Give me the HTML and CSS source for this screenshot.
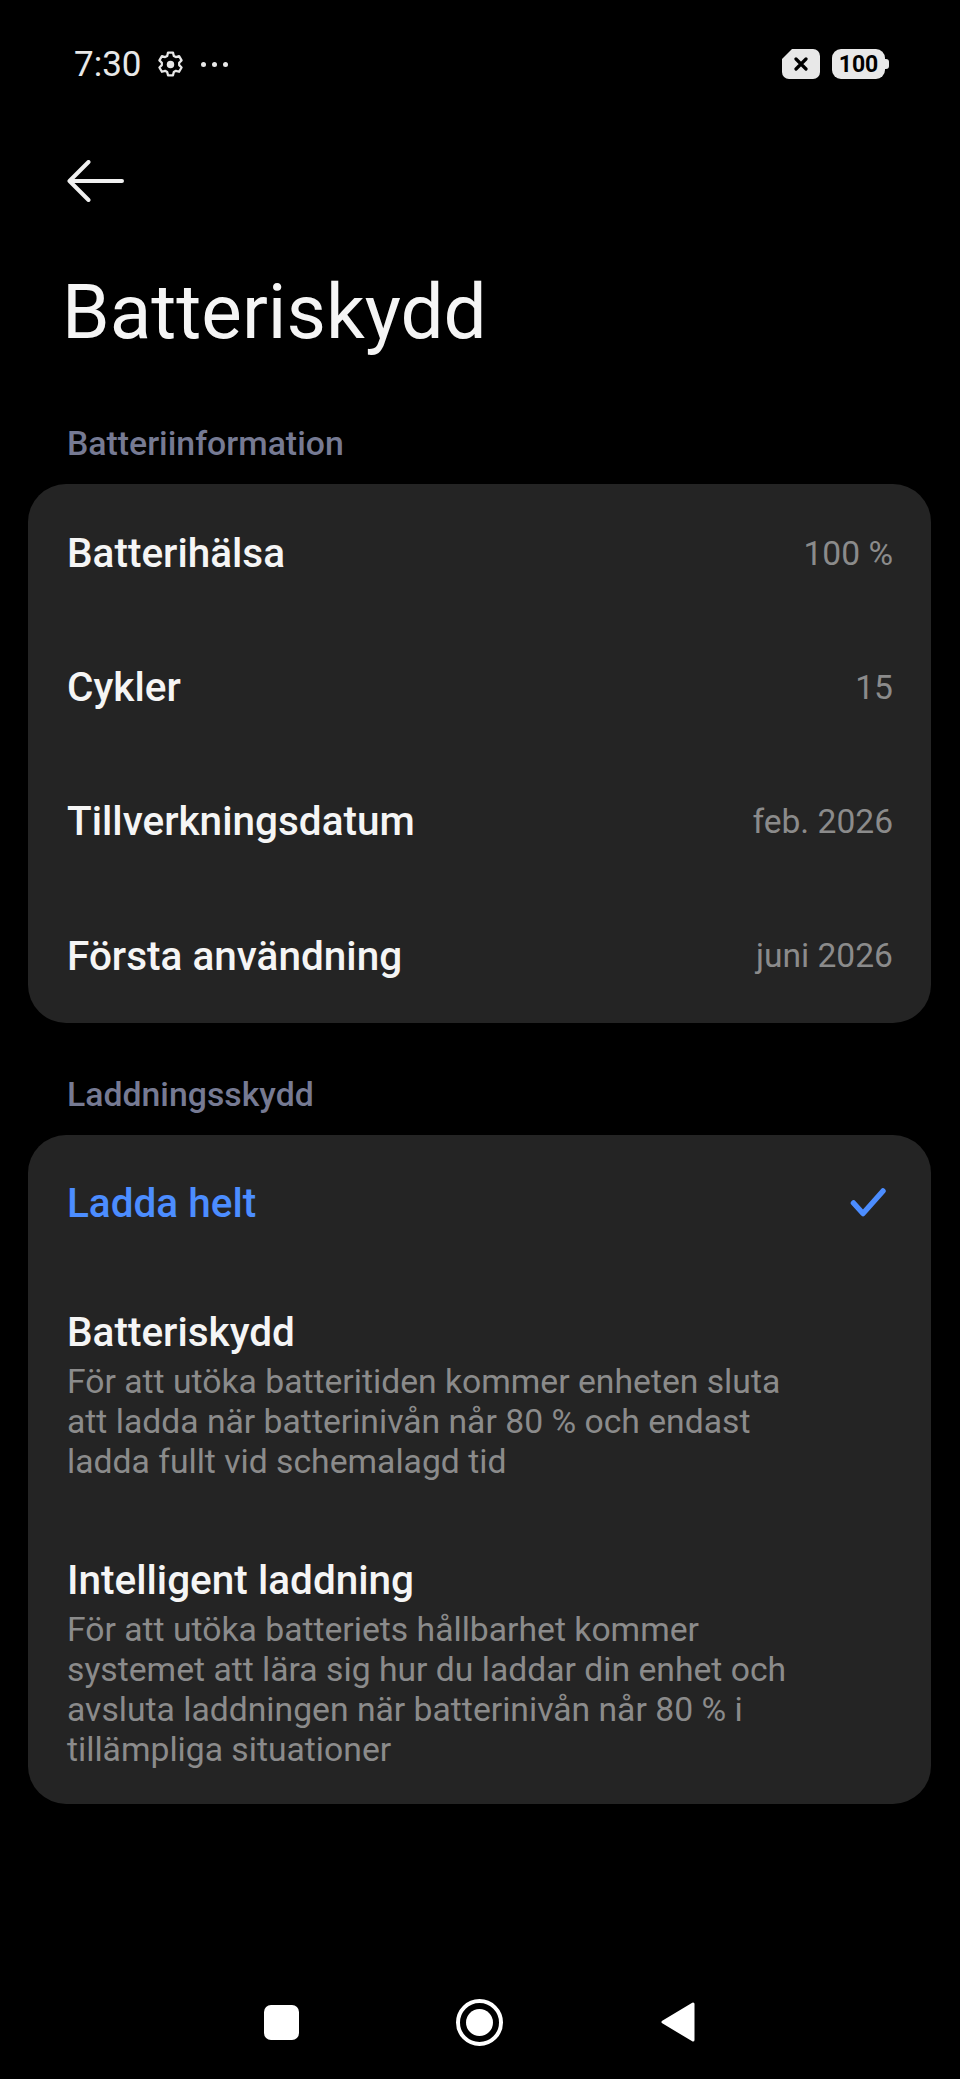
FILE: index.html
```html
<!DOCTYPE html>
<html lang="sv">
<head>
    <meta charset="UTF-8">
    <title>Batteriskydd</title>
    <link rel="stylesheet" href="styles.css">
</head>
<body>
    <!-- Status bar -->
    <div class="status-bar">
        <div class="status-left">
            <span class="clock">7:30</span>
            <svg class="gear" width="29" height="29" viewBox="0 0 28 28" fill="none" stroke="#e8e8e8" stroke-width="2.2" stroke-linejoin="round">
                <path d="M11.6 2.500h4.800l.8 3.200 2 1.100 3.100-.9 2.400 4.100-2.300 2.300v2.300l2.300 2.300-2.400 4.100-3.100-.9-2 1.100-.8 3.200h-4.800l-.8-3.200-2-1.100-3.100.9-2.400-4.100 2.300-2.300v-2.300l-2.300-2.300 2.400-4.100 3.100.9 2-1.100z"/>
                <circle cx="14" cy="14" r="3.600" fill="#e8e8e8" stroke="none"/>
            </svg>
            <div class="dots"><i></i><i></i><i></i></div>
        </div>
        <div class="status-right">
            <div class="sim">
                <svg width="14" height="14" viewBox="0 0 14 14" stroke="#000" stroke-width="3.2" stroke-linecap="round"><path d="M2 2l10 10M12 2L2 12"/></svg>
            </div>
            <div class="battery"><span>100</span></div>
        </div>
    </div>

    <!-- Header -->
    <div class="top-nav">
        <svg width="58" height="42" viewBox="0 0 58 42" fill="none" stroke="#f0f0f0" stroke-width="4" stroke-linecap="round" stroke-linejoin="round">
            <path d="M55 21H3M21.500 2L2.500 21l19 19"/>
        </svg>
    </div>
    <h1 class="page-title">Batteriskydd</h1>

    <!-- Battery info -->
    <div class="section-label">Batteriinformation</div>
    <div class="card info">
        <div class="info-row"><span class="row-name">Batterihälsa</span><span class="row-value">100 %</span></div>
        <div class="info-row"><span class="row-name">Cykler</span><span class="row-value">15</span></div>
        <div class="info-row"><span class="row-name">Tillverkningsdatum</span><span class="row-value">feb. 2026</span></div>
        <div class="info-row"><span class="row-name">Första användning</span><span class="row-value">juni 2026</span></div>
    </div>

    <!-- Charging protection -->
    <div class="section-label second">Laddningsskydd</div>
    <div class="card options">
        <div class="info-row selected">
            <span class="row-name">Ladda helt</span>
            <svg width="38" height="32" viewBox="0 0 38 32" fill="none" stroke="#4c8dff" stroke-width="5.500" stroke-linecap="round" stroke-linejoin="round">
                <path d="M4.500 16L14 26.500 34 4"/>
            </svg>
        </div>
        <div class="option">
            <div class="row-name">Batteriskydd</div>
            <p>För att utöka batteritiden kommer enheten sluta att ladda när batterinivån når 80 % och endast ladda fullt vid schemalagd tid</p>
        </div>
        <div class="option">
            <div class="row-name">Intelligent laddning</div>
            <p>För att utöka batteriets hållbarhet kommer systemet att lära sig hur du laddar din enhet och avsluta laddningen när batterinivån når 80 % i tillämpliga situationer</p>
        </div>
    </div>

    <!-- Navigation bar -->
    <div class="nav-bar">
        <div class="nav-square"></div>
        <div class="nav-home"><div></div></div>
        <svg width="36" height="42" viewBox="0 0 36 42" fill="#fff" stroke="#fff" stroke-width="3" stroke-linejoin="round">
            <path d="M33 3v36L3 21z"/>
        </svg>
    </div>
</body>
</html>
```

FILE: styles.css
```css
/* Page */
body {
    margin: 0;
    width: 960px;
    height: 2079px;
    background-color: #000;
    color: #fff;
    font-family: 'Roboto', sans-serif;
    display: flex;
    flex-direction: column;
    overflow: hidden;
}

/* Status bar */
.status-bar {
    display: flex;
    justify-content: space-between;
    align-items: center;
    height: 44px;
    margin-top: 42px;
    padding: 0 75px 0 74px;
}

.status-left {
    display: flex;
    align-items: center;
}

.clock {
    font-size: 35px;
    color: #e8e8e8;
}

.gear {
    margin-left: 14px;
}

.dots {
    display: flex;
    gap: 6px;
    margin-left: 16px;
}

.dots i {
    width: 5px;
    height: 5px;
    border-radius: 50%;
    background-color: #e8e8e8;
}

.status-right {
    display: flex;
    align-items: center;
    gap: 12px;
}

.sim {
    display: flex;
    justify-content: center;
    align-items: center;
    width: 38px;
    height: 30px;
    background-color: #e8e8e8;
    border-radius: 5px 7px 7px 7px;
    clip-path: polygon(10px 0, 100% 0, 100% 100%, 0 100%, 0 10px);
}

.battery {
    position: relative;
    display: flex;
    justify-content: center;
    align-items: center;
    width: 53px;
    height: 30px;
    background-color: #e8e8e8;
    border-radius: 9px;
    color: #000;
    font-size: 23px;
    font-weight: 700;
}

.battery::after {
    content: "";
    position: absolute;
    right: -4px;
    top: 10px;
    width: 4px;
    height: 10px;
    background-color: #e8e8e8;
    border-radius: 0 3px 3px 0;
}

/* Header */
.top-nav {
    display: flex;
    height: 42px;
    margin-top: 74px;
    padding-left: 67px;
}

.page-title {
    margin: 66px 0 0 62px;
    font-size: 76.500px;
    line-height: 88px;
    font-weight: 400;
    color: #f5f5f5;
}

/* Sections */
.section-label {
    margin: 66px 0 0 67px;
    font-size: 33.800px;
    line-height: 44px;
    font-weight: 500;
    color: #767a93;
}

.section-label.second {
    margin-top: 50px;
}

.card {
    margin: 18px 29px 0 28px;
    background-color: #242424;
    border-radius: 38px;
}

.card.info {
    padding-top: 2px;
}

.info-row {
    display: flex;
    justify-content: space-between;
    align-items: center;
    height: 134.200px;
    padding: 0 38px 0 39px;
}

.row-name {
    font-size: 40.500px;
    line-height: 46px;
    font-weight: 500;
    color: #f5f5f5;
}

.row-value {
    font-size: 33.600px;
    color: #8b8b8b;
}

.selected {
    height: 137px;
}

.selected .row-name {
    color: #4c8dff;
}

.selected svg {
    margin-right: 6px;
}

.option {
    padding: 37px 135px 38px 39px;
}

.option:last-child {
    padding-bottom: 34px;
}

.option p {
    margin: 7px 0 0;
    font-size: 33.700px;
    line-height: 40px;
    color: #8b8b8b;
}

/* Navigation bar */
.nav-bar {
    position: absolute;
    left: 0;
    right: 0;
    top: 1998px;
    display: flex;
    justify-content: center;
    align-items: center;
    gap: 157px;
    height: 48px;
}

.nav-square {
    width: 35px;
    height: 35px;
    background-color: #fff;
    border-radius: 7px;
}

.nav-home {
    display: flex;
    justify-content: center;
    align-items: center;
    width: 47px;
    height: 47px;
    border: 4px solid #fff;
    border-radius: 50%;
    box-sizing: border-box;
}

.nav-home div {
    width: 27px;
    height: 27px;
    background-color: #fff;
    border-radius: 50%;
}
```
